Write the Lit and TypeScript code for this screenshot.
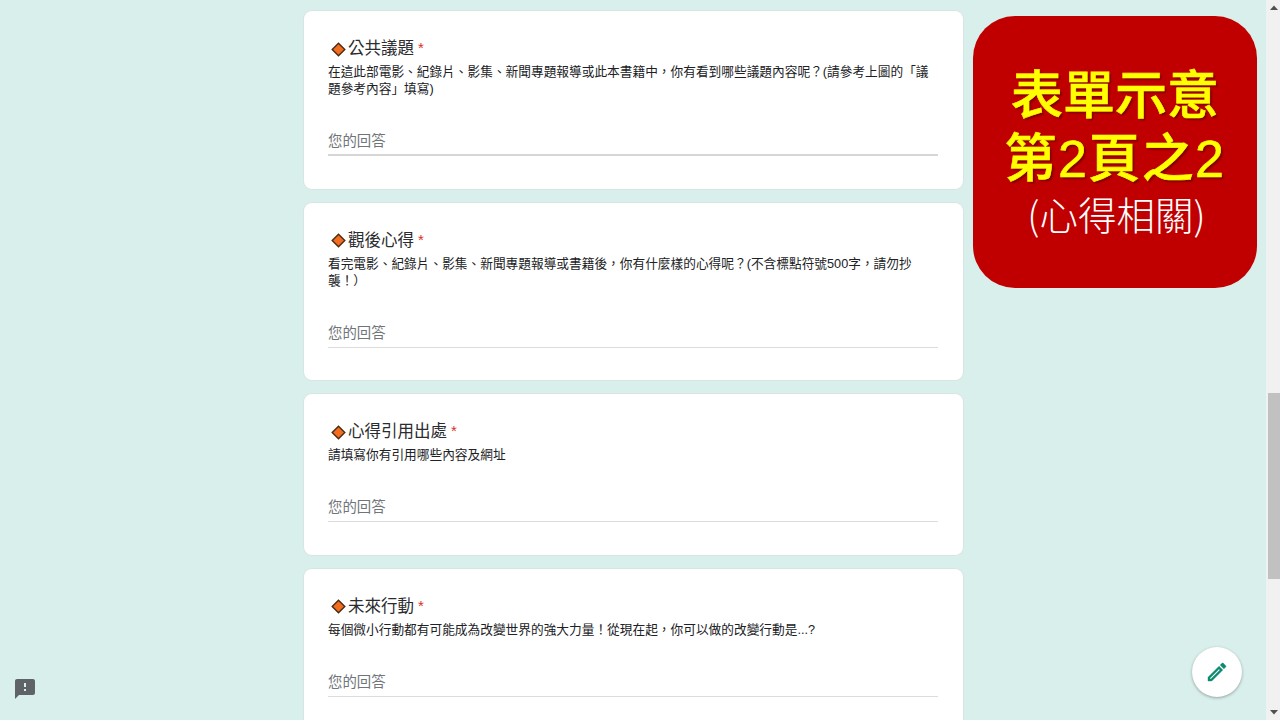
import { LitElement, html, css, svg } from "lit";
import { customElement } from "lit/decorators.js";

const QUESTIONS = [
  {
    title: "公共議題",
    desc: "在這此部電影、紀錄片、影集、新聞專題報導或此本書籍中，你有看到哪些議題內容呢？(請參考上圖的「議題參考內容」填寫)",
    strong: true,
  },
  {
    title: "觀後心得",
    desc: "看完電影、紀錄片、影集、新聞專題報導或書籍後，你有什麼樣的心得呢？(不含標點符號500字，請勿抄襲！）",
    strong: false,
  },
  { title: "心得引用出處", desc: "請填寫你有引用哪些內容及網址", strong: false },
  {
    title: "未來行動",
    desc: "每個微小行動都有可能成為改變世界的強大力量！從現在起，你可以做的改變行動是...?",
    strong: false,
  },
];

const diamond = svg`<path d="M7.5 1.2 13.8 7.5 7.5 13.8 1.2 7.5Z" fill="#f26d1d" stroke="#4a2a14" stroke-width="1.4" stroke-linejoin="miter"/>`;

@customElement("app-root")
export class AppRoot extends LitElement {
  static styles = css`
    :host {
      display: flex;
      position: relative;
      width: 1280px;
      height: 720px;
      overflow: hidden;
      background: #d9efec;
      font-family: "Liberation Sans", "Noto Sans CJK TC", sans-serif;
      color: #202124;
      text-spacing-trim: space-all;
    }
    .page {
      flex: 1;
      min-width: 0;
      display: flex;
      flex-direction: column;
      gap: 14px;
      padding: 11px 0 0 304px;
      box-sizing: border-box;
      height: 720px;
      overflow: hidden;
    }
    .card {
      flex: none;
      width: 659px;
      box-sizing: border-box;
      background: #fff;
      border-radius: 8px;
      padding: 25px 25px 32.5px 24px;
      box-shadow: 0 0 0 1px #d5e6e3;
    }
    .title {
      display: flex;
      align-items: center;
      height: 24px;
      font-size: 16.5px;
      line-height: 24px;
      color: #2b2c2e;
    }
    .diamond {
      width: 15px;
      height: 15px;
      margin: 2px 2px 0 3px;
      flex: none;
    }
    .req {
      color: #d93025;
      margin-left: 4px;
      font-size: 15px;
    }
    .desc {
      margin-top: 4px;
      font-size: 12.7px;
      line-height: 17px;
      color: #202124;
    }
    .answer {
      margin-top: 33px;
      font-size: 14.4px;
      line-height: 20px;
      color: #70757a;
      padding-bottom: 4px;
      border-bottom: 1px solid #dadce0;
    }
    .answer.strong {
      border-bottom: 2px solid #d4d6d8;
      padding-bottom: 3px;
    }
    .scrollbar {
      flex: none;
      width: 14px;
      height: 720px;
      background: #f1f1f1;
      display: flex;
      flex-direction: column;
      align-items: flex-end;
    }
    .arrow {
      width: 12px;
      height: 16px;
      display: block;
      flex: none;
    }
    .thumb {
      width: 12px;
      height: 186px;
      margin-top: 377px;
      background: #c1c1c1;
      flex: none;
    }
    .spacer {
      flex: 1;
    }
    .badge {
      position: absolute;
      left: 973px;
      top: 16px;
      width: 284px;
      height: 272px;
      background: #c00000;
      border-radius: 42px;
      display: flex;
      flex-direction: column;
      align-items: center;
      padding-top: 43px;
      box-sizing: border-box;
      font-family: "Noto Sans CJK TC", sans-serif;
    }
    .big {
      color: #ffff00;
      font-size: 52px;
      font-weight: 500;
      line-height: 65px;
      white-space: nowrap;
      -webkit-text-stroke: 0.6px #ffff00;
      text-shadow: 2px 2px 2px rgba(70, 0, 0, 0.5);
    }
    .big.second {
      font-family: "Liberation Sans", "Noto Sans CJK TC", sans-serif;
      letter-spacing: 1.4px;
      margin-top: 3px;
    }
    .sub {
      color: #fff;
      font-size: 38.5px;
      font-weight: 300;
      line-height: 48px;
      white-space: nowrap;
      margin: -3px 0 0 3px;
    }
    .fab {
      position: absolute;
      left: 1192px;
      top: 647px;
      width: 50px;
      height: 50px;
      border-radius: 50%;
      background: #fff;
      box-shadow: 0 1px 3px rgba(60, 64, 67, 0.45);
      display: flex;
      align-items: center;
      justify-content: center;
    }
    .fab svg {
      width: 24px;
      height: 24px;
      fill: #0b8a70;
      stroke: #0b8a70;
      stroke-width: 0.4;
    }
    .report {
      position: absolute;
      left: 13px;
      top: 677px;
      width: 24px;
      height: 24px;
      fill: #5f6368;
    }
  `;

  render() {
    return html`
      <main class="page">
        ${QUESTIONS.map(
          (q) => html`
            <section class="card">
              <div class="title">
                <svg class="diamond" viewBox="0 0 15 15">${diamond}</svg>
                <span>${q.title}</span><span class="req">*</span>
              </div>
              <div class="desc">${q.desc}</div>
              <div class="answer ${q.strong ? "strong" : ""}">您的回答</div>
            </section>
          `
        )}
      </main>
      <div class="scrollbar">
        <svg class="arrow" viewBox="0 0 12 16"><path d="M6 5.5 10 10H2Z" fill="#505050" /></svg>
        <div class="thumb"></div>
        <div class="spacer"></div>
        <svg class="arrow" viewBox="0 0 12 16"><path d="M2 6h8L6 10.5Z" fill="#505050" /></svg>
      </div>
      <aside class="badge">
        <div class="big">表單示意</div>
        <div class="big second">第2頁之2</div>
        <div class="sub">(心得相關)</div>
      </aside>
      <div class="fab">
        <svg viewBox="0 0 24 24">
          <path
            d="M3 17.25V21h3.75L17.81 9.94l-3.75-3.75L3 17.25zM5.92 19H5v-.92l9.06-9.06.92.92L5.92 19zM20.71 5.63l-2.34-2.34c-.39-.39-1.02-.39-1.41 0l-1.83 1.83 3.75 3.75 1.83-1.83c.39-.39.39-1.02 0-1.41z"
          />
        </svg>
      </div>
      <svg class="report" viewBox="0 0 24 24">
        <path
          d="M20 2H4c-1.1 0-1.99.9-1.99 2L2 22l4-4h14c1.1 0 2-.9 2-2V4c0-1.1-.9-2-2-2zm-7 12h-2v-2h2v2zm0-4h-2V6h2v4z"
        />
      </svg>
    `;
  }
}
